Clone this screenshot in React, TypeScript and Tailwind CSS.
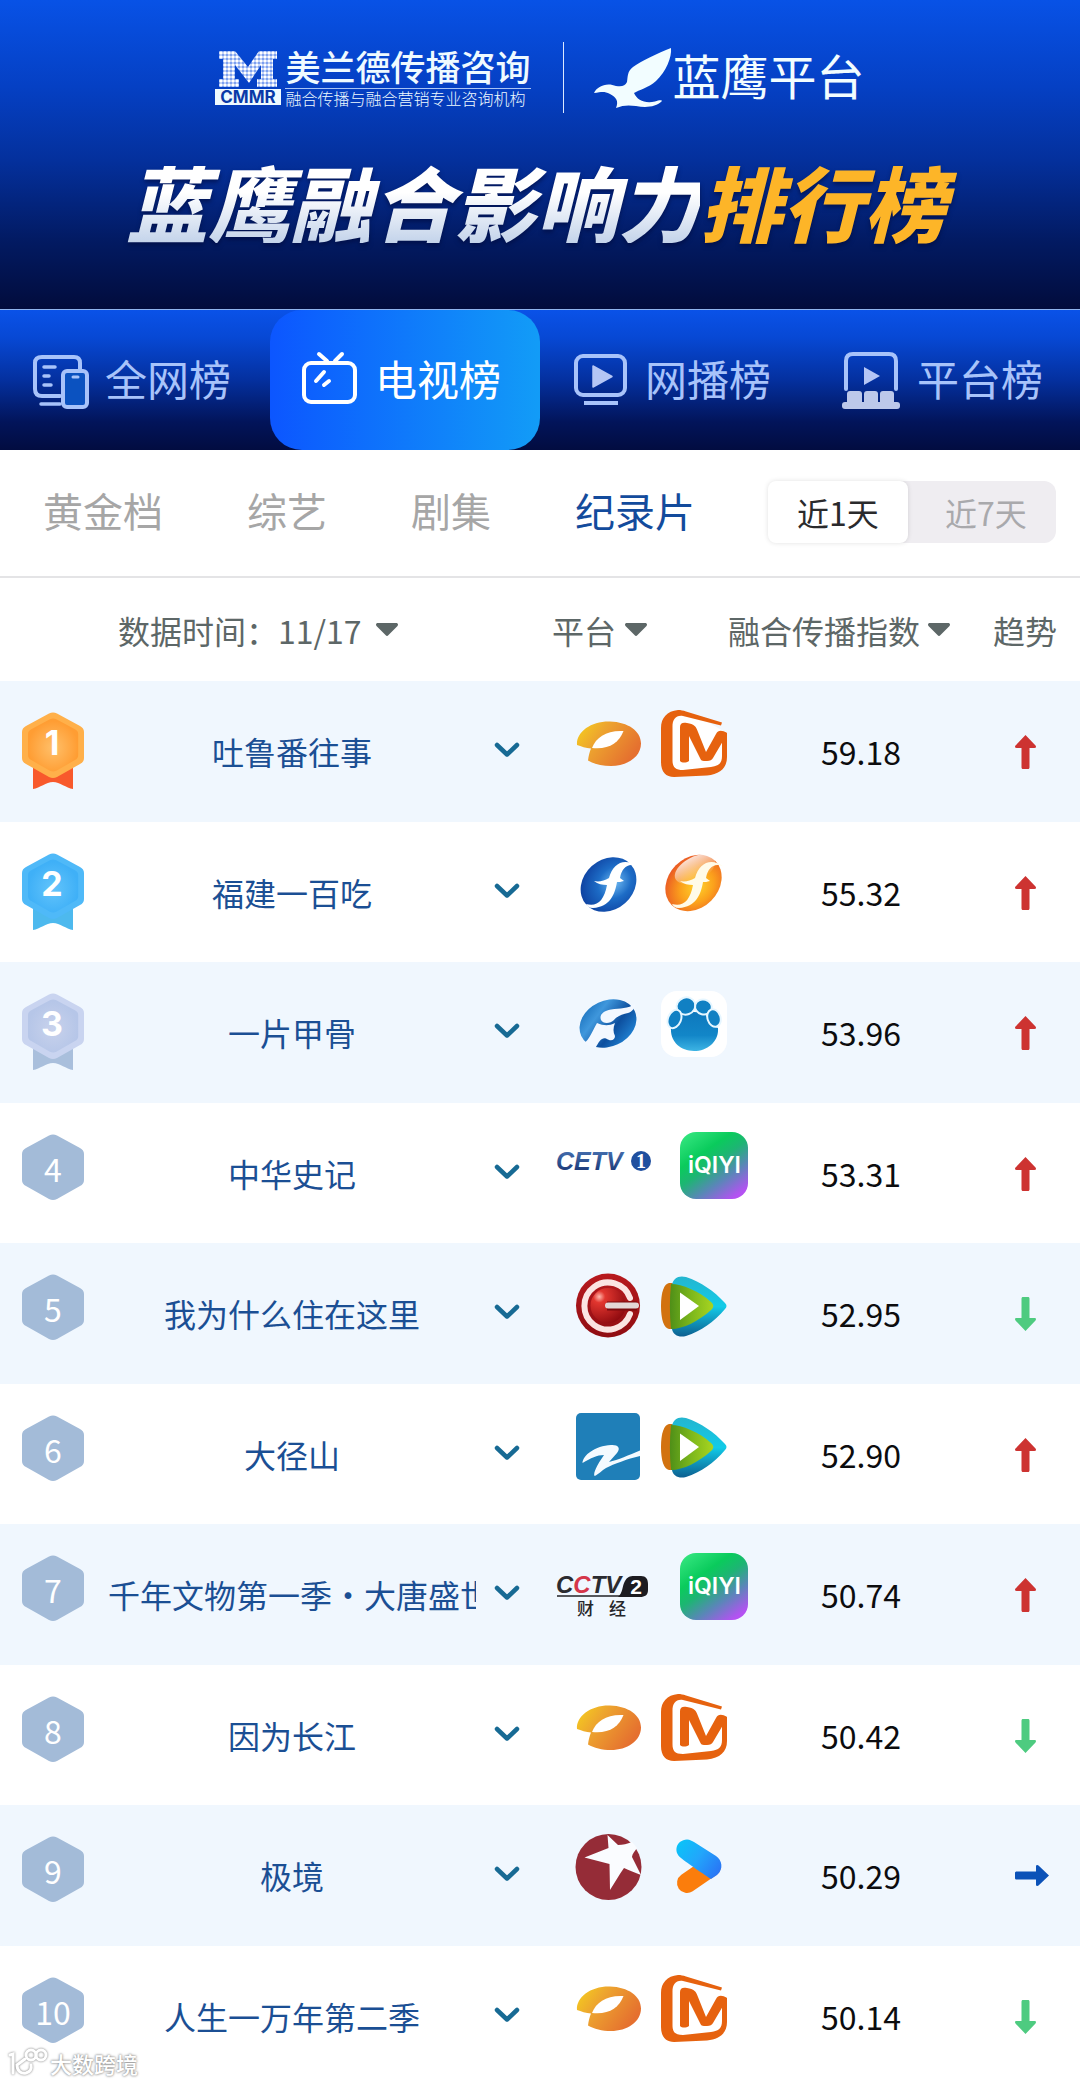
import React, { useState } from "react";

type Trend = "up" | "down" | "flat";

interface Row {
  rank: number;
  name: string;
  logos: [() => React.ReactElement, () => React.ReactElement];
  score: string;
  trend: Trend;
}

/* ---------- channel and platform logos ---------- */

function HunanLogo() {
  return (
    <svg role="img" aria-label="湖南卫视" viewBox="0 0 66 66" className="size-[66px]">
      <defs>
        <linearGradient id="hunan" x1="0" y1="0" x2="1" y2="0.5">
          <stop offset="0" stopColor="#f6d21c" />
          <stop offset="0.4" stopColor="#eda52f" />
          <stop offset="1" stopColor="#e5702f" />
        </linearGradient>
      </defs>
      <path
        fill="url(#hunan)"
        d="M2 35C1 22 16 11 35 11.500C53 12 66 21 66 33.500C66 47 52 56 36 56C27 56 19 54 13 50.500C13.500 46 14.500 42 16 38.500C11 38 6 36.500 2 35Z"
      />
      <path fill="#fff" d="M17 38C21 27 32 20 48.500 21C44 33 33 40 17 38Z" />
    </svg>
  );
}

function MangoLogo() {
  return (
    <svg role="img" aria-label="芒果TV" viewBox="0 0 66 67" className="h-[67px] w-[66px]">
      <path fill="#fff" d="M14 4L40 8L64 22V48L50 62L14 63L6 52V14Z" />
      <g fill="#e6620f">
        <path d="M17 0C6 1 0 8 0 18V52C0 62 5 67 13 67L46 65.500C59 64 66 58 66 47V23L61 22V46C61 53 58 56 50 57L22 60C14 60 11.500 57 11.500 50V17C11.500 9 15 5 22 6L60 15.500L61 12.500L25 1.500C22 .5 20 0 17 0Z" />
        <path d="M19 17C19 13 22 12 26 13C33 14 35 16 37 22L45 42L55 24C57 20 61 20 66 23L62 31L52 48C51 50 49 51 46 51H43C41 51 40 50 39.500 49L28 26V51C25 53 21 53 19 51Z" />
      </g>
    </svg>
  );
}

const F_MARK =
  "M63 16C54 11 47 16 45 27L49 30C46 31 44 31 42 31C40 43 35 56 18 57C14 57 12 55 11 53C22 56 29 50 32 34C27 34 23 33 19 30C24 31 29 30 34 27C38 12 50 6 63 16Z";

function FujianLogo() {
  return (
    <svg role="img" aria-label="东南卫视" viewBox="0 0 66 66" className="size-[66px]">
      <defs>
        <radialGradient id="fujian" cx="0.6" cy="0.55" r="0.6">
          <stop offset="0" stopColor="#6fbaf2" />
          <stop offset="0.5" stopColor="#1d6cc6" />
          <stop offset="1" stopColor="#0f44a3" />
        </radialGradient>
      </defs>
      <ellipse cx="33.500" cy="33.500" rx="30" ry="25" transform="rotate(-42 33.500 33.500)" fill="url(#fujian)" />
      <path fill="#fff" d={F_MARK} />
    </svg>
  );
}

function HaiboLogo() {
  return (
    <svg role="img" aria-label="海博TV" viewBox="0 0 66 66" className="size-[66px]">
      <defs>
        <radialGradient id="haibo" cx="0.5" cy="0.6" r="0.6">
          <stop offset="0" stopColor="#ffd42a" />
          <stop offset="0.5" stopColor="#fba01c" />
          <stop offset="1" stopColor="#ea5a24" />
        </radialGradient>
        <linearGradient id="haiboShine" x1="0" y1="0" x2="0" y2="1">
          <stop offset="0" stopColor="#fff" stopOpacity="0.8" />
          <stop offset="1" stopColor="#fff" stopOpacity="0" />
        </linearGradient>
      </defs>
      <ellipse cx="32.500" cy="32" rx="31" ry="25" transform="rotate(-45 32.500 32)" fill="url(#haibo)" />
      <ellipse cx="34" cy="18" rx="22" ry="12" transform="rotate(-28 34 18)" fill="url(#haiboShine)" />
      <path fill="#fffbe8" d={F_MARK} />
    </svg>
  );
}

function JilinLogo() {
  return (
    <svg role="img" aria-label="吉林卫视" viewBox="0 0 66 66" className="size-[66px]">
      <defs>
        <linearGradient id="jilin" x1="0" y1="0" x2="0.7" y2="1">
          <stop offset="0" stopColor="#0f66b4" />
          <stop offset="0.35" stopColor="#3f97dc" />
          <stop offset="0.7" stopColor="#0d4f9e" />
          <stop offset="1" stopColor="#1f7fd0" />
        </linearGradient>
      </defs>
      <ellipse cx="33" cy="32.500" rx="29.500" ry="23" transform="rotate(-25 33 32.500)" fill="url(#jilin)" />
      <path fill="#f3f8ff" d="M60 13C53 18 45 17 36 18.500C28 20 24 24 26 29C28 33 35 33 39 29C42 25 48 23 53 22C57 21 60 17 60 13Z" />
      <path fill="#f3f8ff" d="M22 32C29 35 34 35 40 32C38 37 38 41 40 45C40 49 36 51 31 47.500C27 46 24 50 20 58L9 52C14 49 17 41 22 32Z" />
    </svg>
  );
}

function PawLogo() {
  return (
    <svg role="img" aria-label="央视频道" viewBox="0 0 66 66" className="size-[66px] rounded-2xl bg-white">
      <defs>
        <linearGradient id="paw" x1="0" y1="0" x2="0" y2="1">
          <stop offset="0" stopColor="#0e78bd" />
          <stop offset="0.6" stopColor="#1286c8" />
          <stop offset="1" stopColor="#3db4e4" />
        </linearGradient>
      </defs>
      <path fill="url(#paw)" d="M21 24C27 20 39 20 45 24C48 32 52 35 57 37C58 50 47 60 33 60C19 60 9 50 10 37C15 36 19 31 21 24Z" />
      <g fill="#1180c3" stroke="#e6f6ff" strokeWidth="2">
        <ellipse cx="25" cy="15" rx="9.500" ry="8.500" transform="rotate(-20 25 15)" />
        <ellipse cx="42.500" cy="16" rx="8.500" ry="7.500" transform="rotate(15 42.500 16)" />
        <ellipse cx="13.500" cy="28" rx="6.500" ry="9.500" transform="rotate(22 13.500 28)" />
        <ellipse cx="53" cy="27" rx="6.500" ry="9" transform="rotate(-18 53 27)" />
      </g>
    </svg>
  );
}

function CetvLogo() {
  return (
    <svg role="img" aria-label="CETV1" viewBox="0 0 106 66" className="h-[66px] w-[106px]">
      <defs>
        <linearGradient id="cetv" x1="0" y1="0" x2="0" y2="1">
          <stop offset="0" stopColor="#4c78b8" />
          <stop offset="1" stopColor="#14306e" />
        </linearGradient>
      </defs>
      <text x="2" y="38" fontFamily="'Liberation Sans', Arial, sans-serif" fontWeight="700" fontStyle="italic" fontSize="25" fill="url(#cetv)">
        CETV
      </text>
      <circle cx="87" cy="29" r="10" fill="#1f4f9f" />
      <text x="87" y="36" textAnchor="middle" fontFamily="'Liberation Serif', serif" fontWeight="700" fontSize="20" fill="#fff">
        1
      </text>
    </svg>
  );
}

function IqiyiLogo() {
  return (
    <div
      role="img"
      aria-label="爱奇艺"
      className="flex h-[67px] w-[68px] items-center justify-center rounded-2xl bg-[linear-gradient(145deg,#3bea85_0%,#0acb5c_32%,#1db573_48%,#5a86b8_68%,#b452f2_90%)] font-[family-name:Inter] text-[23px] leading-none font-semibold text-white"
    >
      iQIYI
    </div>
  );
}

function ChongqingLogo() {
  return (
    <svg role="img" aria-label="重庆卫视" viewBox="0 0 66 66" className="size-[66px]">
      <defs>
        <radialGradient id="cqBall" cx="0.25" cy="0.25" r="0.85">
          <stop offset="0" stopColor="#ffb9ae" />
          <stop offset="0.2" stopColor="#e2362f" />
          <stop offset="1" stopColor="#8e0a0f" />
        </radialGradient>
        <linearGradient id="cqRing" x1="0" y1="0" x2="0" y2="1">
          <stop offset="0" stopColor="#b81a1e" />
          <stop offset="1" stopColor="#8f0d12" />
        </linearGradient>
      </defs>
      <circle cx="33" cy="33.500" r="32" fill="url(#cqRing)" />
      <circle cx="33" cy="33.500" r="17.500" fill="url(#cqBall)" />
      <path d="M55 26A23.500 23.500 0 1 0 55 42" fill="none" stroke="#fbe4e2" strokeWidth="6" strokeLinecap="round" />
      <path d="M32 34H62" stroke="#7a0a0e" strokeWidth="9" />
      <path d="M33 33.500H61" stroke="#e3d6d6" strokeWidth="6" strokeLinecap="round" />
    </svg>
  );
}

function TencentLogo() {
  return (
    <svg role="img" aria-label="腾讯视频" viewBox="0 0 66 66" className="size-[66px]">
      <defs>
        <linearGradient id="txBlue" x1="0" y1="0" x2="0" y2="1">
          <stop offset="0" stopColor="#24b5cf" />
          <stop offset="0.5" stopColor="#12cbe8" />
          <stop offset="1" stopColor="#0d5f90" />
        </linearGradient>
        <linearGradient id="txGreen" x1="0" y1="0" x2="1" y2="0">
          <stop offset="0" stopColor="#4f8f18" />
          <stop offset="0.5" stopColor="#7db81c" />
          <stop offset="1" stopColor="#a8d420" />
        </linearGradient>
      </defs>
      <path fill="#d2720f" d="M8 11C3 12 0 20 0 34C0 48 3 56 8 57H18V11Z" />
      <path fill="url(#txBlue)" d="M11 13C12 6 18 3 25 5C40 10 53 19 64 31C66 33 66 35 64 37C53 50 40 59 25 64C18 66 12 63 11 57Z" />
      <path fill="url(#txGreen)" d="M10 12C21 12 38 19 50 30C53 33 53 35 50 38C38 49 22 57 10 57C8.500 42 8.500 27 10 12Z" />
      <path fill="#fff" d="M19 20.500L38 34L19 48Z" />
    </svg>
  );
}

function ZhejiangLogo() {
  return (
    <svg role="img" aria-label="浙江卫视" viewBox="0 0 66 67" className="h-[67px] w-[66px]">
      <rect x="1" width="64" height="67" rx="5" fill="#1f7fb8" />
      <path
        fill="#f4faff"
        d="M7.500 50C8 42 20 33 36 32C43 31.500 46 35 42 40L34 49C43 47 54 42 65 37.500V43C52 46 39 51 31 55C27 57 23 62 19.500 63C18 60 22 52 29 42C22 42 16 45 7.500 50Z"
      />
    </svg>
  );
}

function Cctv2Logo() {
  return (
    <svg role="img" aria-label="CCTV2 财经" viewBox="0 0 106 67" className="h-[67px] w-[106px]">
      <g fontFamily="'Liberation Sans', Arial, sans-serif" fontStyle="italic" fontSize="24" fill="#2b2b30" fontWeight="700">
        <text x="2" y="40">
          C<tspan fill="#d5364a">C</tspan>TV
        </text>
      </g>
      <path d="M3 43H68" stroke="#55575c" strokeWidth="2" />
      <path fill="#1d1c20" d="M64 44C69 40 68 33 71 28C73 24 76 23 80 23H87C92 23 94 26 94 31V37C94 42 91 44 86 44Z" />
      <text x="82" y="41" textAnchor="middle" fontFamily="'Liberation Sans', Arial, sans-serif" fontWeight="700" fontSize="21" fill="#fff">
        2
      </text>
      <g fontFamily="'Noto Sans CJK SC', sans-serif" fontSize="17" fill="#26262a" fontWeight="500">
        <text x="23" y="62">财</text>
        <text x="55" y="62">经</text>
      </g>
    </svg>
  );
}

function StarLogo() {
  return (
    <svg role="img" aria-label="北京卫视" viewBox="0 0 67 67" className="size-[67px]">
      <circle cx="33.500" cy="33" r="33" fill="#952c37" />
      <path
        fill="#fafcff"
        d="M32.500 1L43 11C48 11 52 10 57 8L62 14C60 17 57 20 57 23L66 41C60 39 54 36 49 34C44 41 40 48 35 56L34.500 30L9.500 23.500L33.500 14Z"
      />
    </svg>
  );
}

function YoukuLogo() {
  return (
    <svg role="img" aria-label="优酷" viewBox="0 0 66 66" className="size-[66px]">
      <defs>
        <linearGradient id="youku" x1="14" y1="8" x2="58" y2="40" gradientUnits="userSpaceOnUse">
          <stop offset="0" stopColor="#08c6f8" />
          <stop offset="0.5" stopColor="#22a6fb" />
          <stop offset="1" stopColor="#2a72f5" />
        </linearGradient>
      </defs>
      <path d="M49 32.500L25 49" fill="none" stroke="#fb7d0c" strokeWidth="20" strokeLinecap="round" />
      <path
        fill="url(#youku)"
        d="M19 24C11 18 14 6 25 5.500C28 5.500 30 7 32 8L54 22C60 26 62 35 55 41L49 45C43 41 25 29 19 24Z"
      />
    </svg>
  );
}

/* ---------- small glyphs ---------- */

function Chevron() {
  return (
    <svg viewBox="0 0 26 16" className="h-4 w-[26px]" fill="none" aria-hidden="true">
      <path d="M3 3L13 12.500L23 3" stroke="#176a94" strokeWidth="4.500" strokeLinecap="round" strokeLinejoin="round" />
    </svg>
  );
}

function Caret() {
  return (
    <svg viewBox="0 0 22 13" className="h-[13px] w-[22px] shrink-0" aria-hidden="true">
      <path d="M2 0H20C22 0 22.500 1.500 21.500 3L12.500 12C11.500 13.200 10.500 13.200 9.500 12L.5 3C-.5 1.500 0 0 2 0Z" fill="#5d6767" />
    </svg>
  );
}

const UP_ARROW =
  "M10.500 0L20.500 10.500C21.500 12 21 13 19.500 13H14.500V32C14.500 33.500 14 34 13 34H8C7 34 6.500 33.500 6.500 32V13H1.500C0 13-.5 12 .5 10.500Z";

function TrendArrow({ trend }: { trend: Trend }) {
  if (trend === "flat") {
    return (
      <svg role="img" aria-label="持平" viewBox="0 0 34 21" className="my-[6px] h-[21px] w-[34px]">
        <path transform="translate(34 0) rotate(90)" d={UP_ARROW} fill="#0b52b8" />
      </svg>
    );
  }
  if (trend === "down") {
    return (
      <svg role="img" aria-label="下降" viewBox="0 0 21 34" className="h-[34px] w-[21px]">
        <path transform="rotate(180 10.500 17)" d={UP_ARROW} fill="#4ecb80" />
      </svg>
    );
  }
  return (
    <svg role="img" aria-label="上升" viewBox="0 0 21 34" className="h-[34px] w-[21px]">
      <path d={UP_ARROW} fill="#cd3331" />
    </svg>
  );
}

const MEDALS = [
  { rim: "#ffb04a", face: "#ff9d33", glow: "#ffc06a", ribbon: "#f8592c" },
  { rim: "#4fb9f8", face: "#3fb0f7", glow: "#62c4fb", ribbon: "#4db9ee" },
  { rim: "#c9d4f0", face: "#b6c6e8", glow: "#c8d2ec", ribbon: "#a9bfdc" },
];

const HEX = "M27 1.500Q31 -.5 35 1.500L58 14Q62 16 62 20V46Q62 50 58 52L35 65Q31 67 27 65L4 52Q0 50 0 46V20Q0 16 4 14Z";

function RankBadge({ rank }: { rank: number }) {
  const medal = MEDALS[rank - 1];
  if (medal) {
    const id = "medal" + rank;
    return (
      <svg role="img" aria-label={"第" + rank + "名"} viewBox="0 0 62 78" className="h-[78px] w-[62px]">
        <defs>
          <radialGradient id={id} cx="0.5" cy="0.55" r="0.5">
            <stop offset="0" stopColor={medal.glow} />
            <stop offset="1" stopColor={medal.face} />
          </radialGradient>
        </defs>
        <path d="M11 50H51V77C44 76 38 70 31 70C24 70 18 76 11 77Z" fill={medal.ribbon} />
        <path d={HEX} fill={medal.rim} />
        <path d={HEX} transform="translate(6 6) scale(0.81)" fill={"url(#" + id + ")"} />
        <text x="30" y="43" textAnchor="middle" fontFamily="Inter, sans-serif" fontWeight="700" fontSize="34" fill="#fff">
          {rank}
        </text>
      </svg>
    );
  }
  return (
    <svg role="img" aria-label={"第" + rank + "名"} viewBox="0 0 62 67" className="h-[67px] w-[62px]">
      <path d={HEX} fill="#a3bbd8" />
      <text x="31" y="48" textAnchor="middle" fontFamily="'Noto Sans CJK SC', sans-serif" fontSize="32" fill="#fff">
        {rank}
      </text>
    </svg>
  );
}

/* ---------- header logos ---------- */

function CmmrLogo() {
  return (
    <svg role="img" aria-label="CMMR" viewBox="0 0 66 54" className="h-[54px] w-[66px]">
      <defs>
        <pattern id="dots" width="4" height="4" patternUnits="userSpaceOnUse">
          <rect width="4" height="4" fill="#6c94ee" />
          <circle cx="2" cy="2" r="1.800" fill="#fff" />
        </pattern>
      </defs>
      <path
        fill="url(#dots)"
        d="M4 0H20L33 16L44 0H62V8H58V28H62V36H42V28H46V14L34 32L20 14V28H24V36H4V28H8V8H4Z"
      />
      <rect y="38" width="66" height="16" fill="#effaff" />
      <text x="33" y="52" textAnchor="middle" fontFamily="Inter, sans-serif" fontWeight="700" fontSize="17" fill="#0a3aa8">
        CMMR
      </text>
    </svg>
  );
}

function EagleLogo() {
  return (
    <svg role="img" aria-label="蓝鹰" viewBox="0 0 78 60" className="h-[60px] w-[78px]">
      <path
        fill="#f2fdff"
        d="M77 0C78 9 72 24 62 33C54 40 45 42 40 45C43 52 51 56 61 53.500C65 52 68 52 68 53C62 59 52 60 42 58C35 57 29 57 22 60C25 53 22 49 16 46C10 43 8 44 0 45C3 38 13 34 22 38C28 39 31 38 33 34C34 28 33 24 39 19C47 13 64 5 77 0Z"
      />
    </svg>
  );
}

/* ---------- navigation icons ---------- */

function DevicesIcon() {
  return (
    <svg viewBox="0 0 58 58" className="size-[58px]" fill="none" stroke="#a8c3fa" strokeWidth="4" strokeLinecap="round" aria-hidden="true">
      <path d="M28 45H10Q3 45 3 38V12Q3 6 10 6H42Q48 6 48 12V18" />
      <path d="M12 16H23M12 25H17M12 34H19M9 53H28" strokeWidth="3.500" />
      <rect x="31" y="20" width="24" height="36" rx="4" fill="#0b52c0" />
      <path d="M41 26H46" strokeWidth="3" />
    </svg>
  );
}

function TvIcon() {
  return (
    <svg viewBox="0 0 58 58" className="size-[58px]" fill="none" stroke="#fff" strokeWidth="4" strokeLinecap="round" aria-hidden="true">
      <rect x="2" y="12" width="51" height="39" rx="7" />
      <path d="M17 3L25 10M40 3L33 10M22 21L14 30M27 30L22 34" />
    </svg>
  );
}

function WebcastIcon() {
  return (
    <svg viewBox="0 0 58 58" className="size-[58px]" fill="none" stroke="#a8c3fa" strokeWidth="4" aria-hidden="true">
      <rect x="4" y="5" width="49" height="39" rx="7" />
      <path d="M21 15V36L40 25.500Z" fill="#b5c6f5" stroke="#b5c6f5" strokeWidth="1.500" strokeLinejoin="round" />
      <path d="M12 52H46" />
    </svg>
  );
}

function PlatformIcon() {
  return (
    <svg viewBox="0 0 60 58" className="h-[58px] w-[60px]" fill="none" stroke="#a8c3fa" strokeWidth="4" strokeLinecap="round" aria-hidden="true">
      <path d="M4 38V10Q4 3 11 3H47Q54 3 54 10V38" />
      <path d="M22 16V34L38 25Z" fill="#b5c6f5" stroke="none" />
      <g fill="#bcc8ea" stroke="none">
        <rect x="5" y="40" width="15" height="16" rx="3" />
        <rect x="22" y="40" width="14" height="16" rx="3" />
        <rect x="38" y="40" width="14" height="16" rx="3" />
        <rect x="0" y="51" width="58" height="7" rx="3" />
      </g>
    </svg>
  );
}

/* ---------- data ---------- */

const TABS = [
  { label: "全网榜", Icon: DevicesIcon },
  { label: "电视榜", Icon: TvIcon },
  { label: "网播榜", Icon: WebcastIcon },
  { label: "平台榜", Icon: PlatformIcon },
];

const GENRES = ["黄金档", "综艺", "剧集", "纪录片"];
const RANGES = ["近1天", "近7天"];

const ROWS: Row[] = [
  { rank: 1, name: "吐鲁番往事", logos: [HunanLogo, MangoLogo], score: "59.18", trend: "up" },
  { rank: 2, name: "福建一百吃", logos: [FujianLogo, HaiboLogo], score: "55.32", trend: "up" },
  { rank: 3, name: "一片甲骨", logos: [JilinLogo, PawLogo], score: "53.96", trend: "up" },
  { rank: 4, name: "中华史记", logos: [CetvLogo, IqiyiLogo], score: "53.31", trend: "up" },
  { rank: 5, name: "我为什么住在这里", logos: [ChongqingLogo, TencentLogo], score: "52.95", trend: "down" },
  { rank: 6, name: "大径山", logos: [ZhejiangLogo, TencentLogo], score: "52.90", trend: "up" },
  { rank: 7, name: "千年文物第一季・大唐盛世", logos: [Cctv2Logo, IqiyiLogo], score: "50.74", trend: "up" },
  { rank: 8, name: "因为长江", logos: [HunanLogo, MangoLogo], score: "50.42", trend: "down" },
  { rank: 9, name: "极境", logos: [StarLogo, YoukuLogo], score: "50.29", trend: "flat" },
  { rank: 10, name: "人生一万年第二季", logos: [HunanLogo, MangoLogo], score: "50.14", trend: "down" },
];

/* ---------- page ---------- */

function Banner() {
  return (
    <header className="flex h-[309px] flex-col items-center overflow-hidden bg-[linear-gradient(180deg,#0852e6_0%,#0540c4_28%,#04309c_52%,#021a62_78%,#020c3c_100%)] pt-[42px] whitespace-nowrap">
      <div className="flex h-[71px] items-center">
        <CmmrLogo />
        <div className="ml-1 flex flex-col text-[#effaff]">
          <span className="text-[35px] leading-9 font-medium">美兰德传播咨询</span>
          <span className="mt-1 border-t border-[#a9c4f5] text-[16px] leading-[18px] font-light">融合传播与融合营销专业咨询机构</span>
        </div>
        <div className="ml-8 h-full w-px bg-[#dbe8ff]" />
        <div className="ml-[30px]">
          <EagleLogo />
        </div>
        <span className="ml-px pb-2 text-[48px] leading-none text-[#f2fdff]">蓝鹰平台</span>
      </div>
      <h1 className="mt-[46px] flex pr-2 text-[82px] leading-[84px] font-black italic drop-shadow-[0_3px_2px_rgba(0,10,60,0.6)]">
        <span className="bg-gradient-to-b from-white from-40% to-[#c3d3ea] bg-clip-text text-transparent">蓝鹰融合影响力</span>
        <span className="text-[#fdb528]">排行榜</span>
      </h1>
    </header>
  );
}

function HeadSelect({ label, options }: { label: string; options: string[] }) {
  return (
    <select aria-label={label} className="cursor-pointer appearance-none bg-transparent p-0 leading-10 outline-none">
      {options.map((o) => (
        <option key={o}>{o}</option>
      ))}
    </select>
  );
}

export default function App() {
  const [tab, setTab] = useState("电视榜");
  const [genre, setGenre] = useState("纪录片");
  const [range, setRange] = useState("近1天");

  return (
    <div className="relative overflow-hidden bg-white font-['Noto_Sans_CJK_SC',sans-serif]">
      <Banner />

      <nav className="grid h-[141px] grid-cols-4 border-t border-[#8fb4ee] bg-[linear-gradient(180deg,#0a52e8_0%,#0748d4_20%,#04309f_50%,#02145a_80%,#020c40_100%)]">
        {TABS.map(({ label, Icon }) => (
          <button
            key={label}
            type="button"
            onClick={() => setTab(label)}
            className={
              "flex items-center gap-[15px] pl-8 text-[42px] leading-none whitespace-nowrap " +
              (tab === label
                ? "rounded-[32px] bg-[linear-gradient(90deg,#0c56ff,#129cf7)] text-white"
                : "text-[#a8c3fa]")
            }
          >
            <Icon />
            <span className="pb-1">{label}</span>
          </button>
        ))}
      </nav>

      <div className="flex h-[128px] items-center border-b-2 border-[#e4e4e6] pr-6 pb-[2px] pl-[43px]">
        <div className="flex gap-[84px] pb-1 text-[40px] leading-none whitespace-nowrap">
          {GENRES.map((g) => (
            <button
              key={g}
              type="button"
              onClick={() => setGenre(g)}
              className={genre === g ? "text-[#134b9c]" : "text-[#a6a6a6]"}
            >
              {g}
            </button>
          ))}
        </div>
        <div className="ml-auto flex h-[62px] rounded-xl bg-[#efedf1] text-[32px] leading-none">
          {RANGES.map((r) => (
            <button
              key={r}
              type="button"
              onClick={() => setRange(r)}
              className={
                "rounded-lg " +
                (range === r ? "w-[140px] bg-white text-[#2a2a2c] shadow-[0_0_5px_rgba(0,0,0,0.12)]" : "w-[148px] pl-2 text-[#a9a9ac]")
              }
            >
              {r}
            </button>
          ))}
        </div>
      </div>

      <table className="w-full table-fixed border-collapse text-[32px] leading-8 whitespace-nowrap">
        <colgroup>
          <col className="w-[108px]" />
          <col />
          <col className="w-[62px]" />
          <col className="w-[190px]" />
          <col className="w-[37px]" />
          <col className="w-[192px]" />
          <col className="w-[123px]" />
        </colgroup>
        <thead className="text-[#5d6767]">
          <tr className="h-[103px]">
            <th colSpan={3} scope="col" className="p-0 pr-[22px] font-normal">
              <label className="flex items-center justify-center">
                数据时间：
                <HeadSelect label="数据时间" options={["11/17"]} />
                <span className="ml-[14px]">
                  <Caret />
                </span>
              </label>
            </th>
            <th scope="col" className="p-0 pl-[14px] font-normal">
              <label className="flex items-center gap-2">
                <HeadSelect label="平台" options={["平台"]} />
                <Caret />
              </label>
            </th>
            <th colSpan={2} scope="col" className="p-0 font-normal">
              <button type="button" className="flex items-center gap-2">
                融合传播指数
                <Caret />
              </button>
            </th>
            <th scope="col" className="p-0 pl-9 text-left font-normal">
              趋势
            </th>
          </tr>
        </thead>
        <tbody>
          {ROWS.map(({ rank, name, logos: [Channel, Platform], score, trend }) => (
            <tr key={rank} className="h-[140px] align-top last:h-[137px] odd:h-[141px] odd:bg-[#f0f7fe]">
              <td className="p-0 pt-[31px] pl-[22px]">
                <RankBadge rank={rank} />
              </td>
              <td className="overflow-hidden p-0 pt-[50px] text-center leading-10 text-[#1b4f94]">{name}</td>
              <td className="p-0 pt-[61px]">
                <button type="button" aria-label={"展开" + name} className="mx-auto flex">
                  <Chevron />
                </button>
              </td>
              <td colSpan={2} className="p-0 pt-[29px]">
                <div className="flex justify-center gap-5">
                  <Channel />
                  <Platform />
                </div>
              </td>
              <td className="p-0 pt-[50px] text-center leading-10 text-[#0c0c0e]">{score}</td>
              <td className="p-0 pt-[54px] pl-[58px]">
                <TrendArrow trend={trend} />
              </td>
            </tr>
          ))}
        </tbody>
      </table>

      <div className="absolute bottom-1 left-2 flex items-center text-[22px] leading-8 font-medium text-white [text-shadow:0_0_2px_#8d8d8d,0_0_3px_#9a9a9a]">
        <svg viewBox="0 0 42 32" className="h-8 w-[42px] drop-shadow-[0_0_1px_#777]" fill="none" stroke="#fff" strokeWidth="3" strokeLinecap="round" aria-hidden="true">
          <path d="M2 8L5 7V26M17 12L9 18C9 24 13 27 18 26C22 25 24 22 23 18" />
          <circle cx="23" cy="8" r="5" />
          <circle cx="33" cy="8" r="5" />
        </svg>
        大数跨境
      </div>
    </div>
  );
}
